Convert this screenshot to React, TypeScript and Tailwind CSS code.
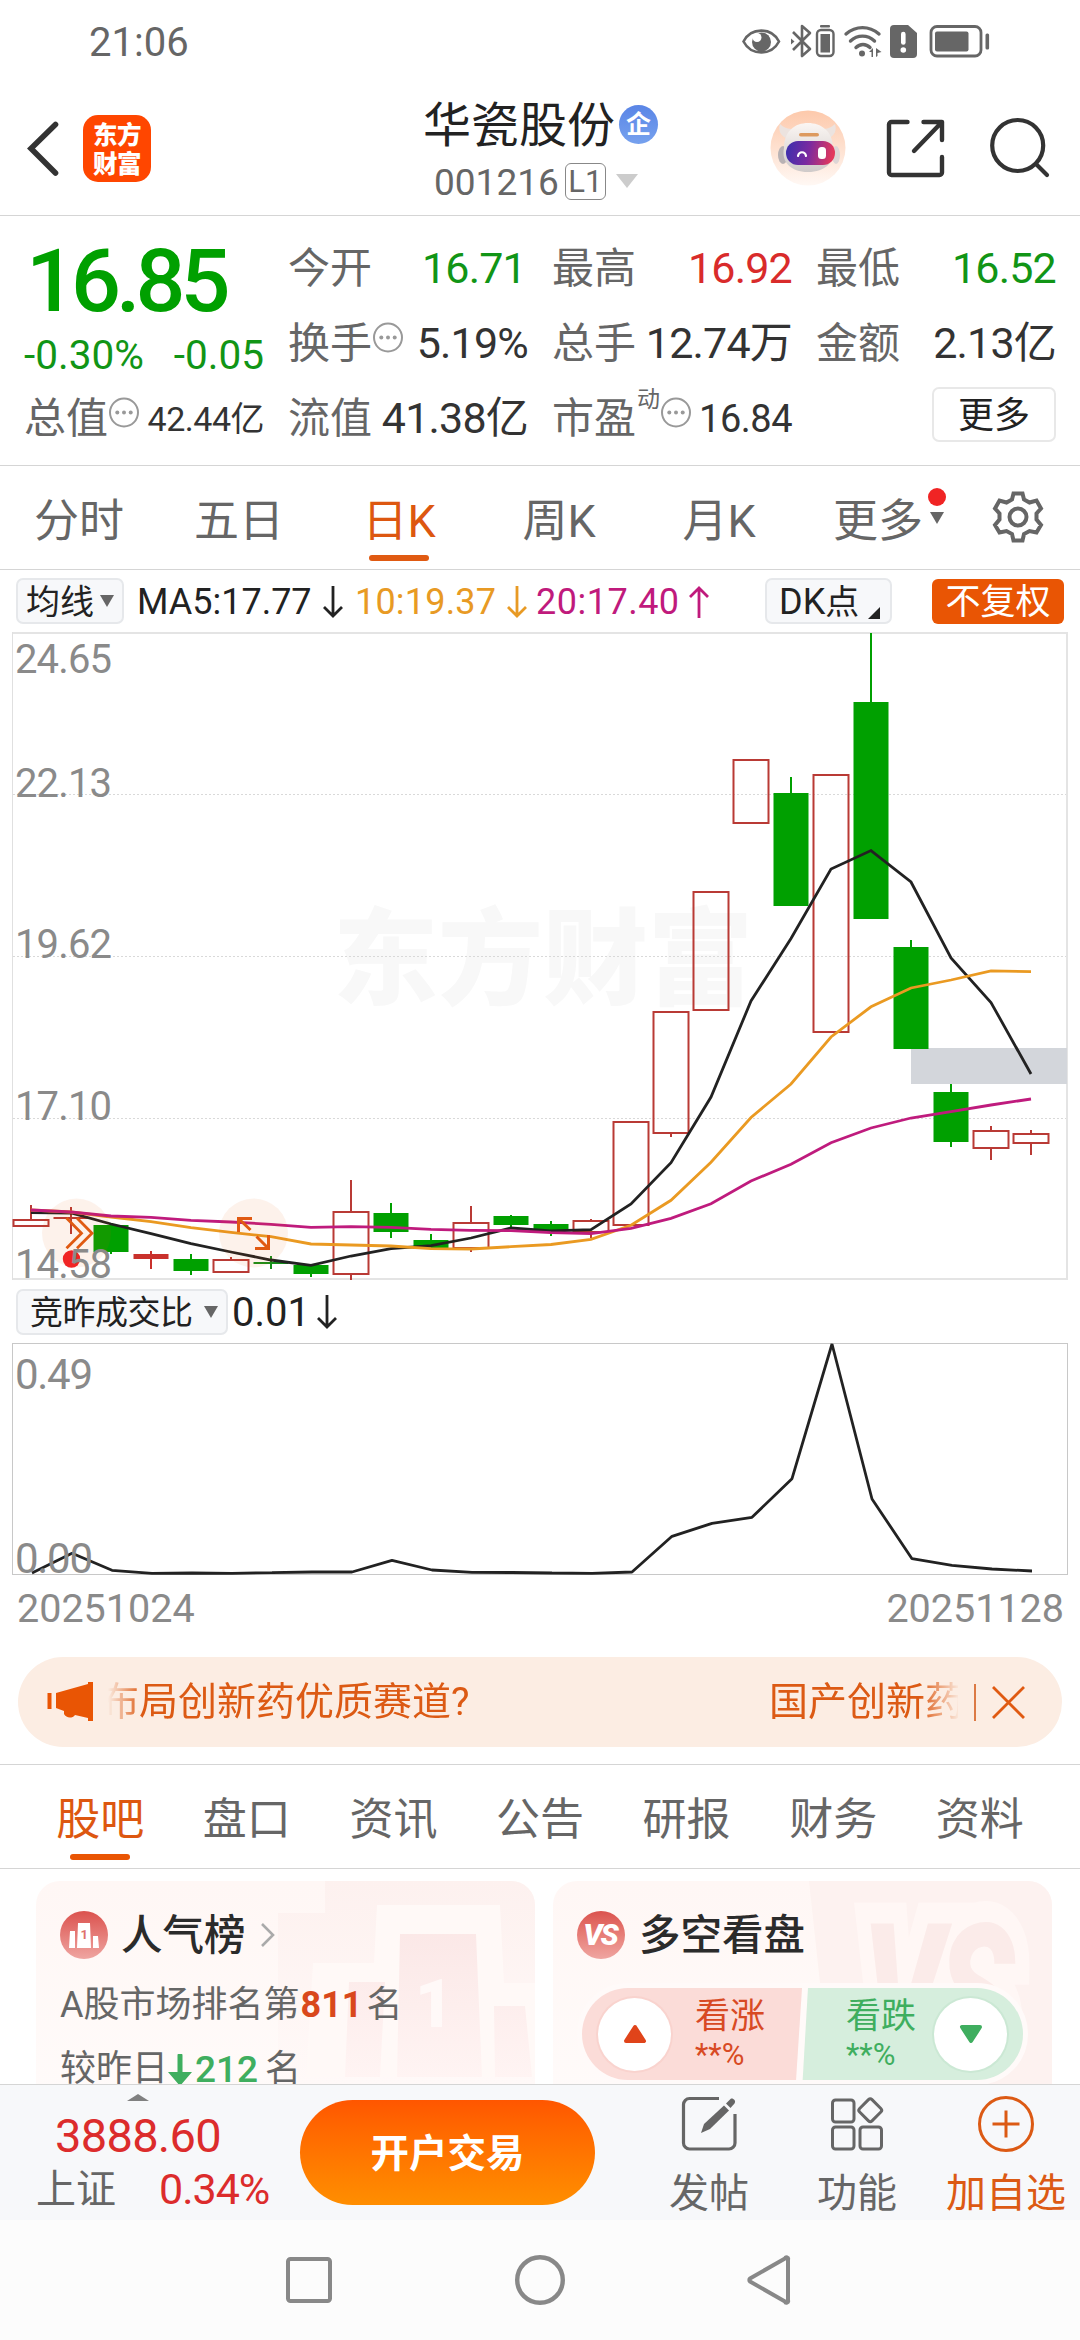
import type { ReactNode } from 'react';

const CJK = "'Noto Sans CJK SC', sans-serif";

const RED = '#b93a35';
const GREEN = '#00a000';

// First candle centre and the distance between two trading days.
const X0 = 31;
const STEP = 40;
const dayX = (i: number) => X0 + STEP * i;

type Candle = {
  kind: 'up' | 'down' | 'flat';
  top: number;
  bottom: number;
  high?: number;
  low?: number;
  color?: string;
};

const CANDLES: Candle[] = [
  { kind: 'up', top: 1219, bottom: 1227, high: 1205 },
  { kind: 'flat', top: 1217, bottom: 1219, high: 1207, low: 1234, color: RED },
  { kind: 'down', top: 1225, bottom: 1252, low: 1254 },
  { kind: 'flat', top: 1254, bottom: 1259, high: 1251, low: 1269, color: '#c9312c' },
  { kind: 'down', top: 1259, bottom: 1271, high: 1254, low: 1275 },
  { kind: 'up', top: 1259, bottom: 1273, high: 1257 },
  { kind: 'flat', top: 1262, bottom: 1264, high: 1256, low: 1269, color: '#15901a' },
  { kind: 'down', top: 1265, bottom: 1274, low: 1277 },
  { kind: 'up', top: 1211, bottom: 1275, high: 1180, low: 1280 },
  { kind: 'down', top: 1213, bottom: 1232, high: 1203, low: 1238 },
  { kind: 'down', top: 1240, bottom: 1249, high: 1234 },
  { kind: 'up', top: 1222, bottom: 1249, high: 1206, low: 1252 },
  { kind: 'down', top: 1216, bottom: 1225, high: 1215, low: 1228 },
  { kind: 'down', top: 1224, bottom: 1231, high: 1221, low: 1236 },
  { kind: 'up', top: 1220, bottom: 1233, high: 1219, low: 1238 },
  { kind: 'up', top: 1121, bottom: 1226 },
  { kind: 'up', top: 1011, bottom: 1134, low: 1137 },
  { kind: 'up', top: 891, bottom: 1011 },
  { kind: 'up', top: 759, bottom: 824 },
  { kind: 'down', top: 793, bottom: 906, high: 777 },
  { kind: 'up', top: 774, bottom: 1033 },
  { kind: 'down', top: 702, bottom: 919, high: 633 },
  { kind: 'down', top: 947, bottom: 1049, high: 940 },
  { kind: 'down', top: 1092, bottom: 1142, high: 1084, low: 1147 },
  { kind: 'up', top: 1130, bottom: 1149, high: 1126, low: 1160 },
  { kind: 'up', top: 1133, bottom: 1144, high: 1130, low: 1155 },
];

const MA5 = [
  1212.7, 1213, 1224, 1233.7, 1243.7, 1252, 1260, 1265.3, 1256, 1248.7, 1245.7, 1238, 1228, 1231,
  1229.7, 1204, 1162.7, 1097, 1001, 938.4, 869, 850.6, 882, 958, 1002.5, 1074,
];
const MA10 = [
  1210, 1212, 1217, 1221.7, 1227.7, 1232.3, 1236.7, 1244, 1245, 1246, 1248.7, 1249, 1246.7, 1244.5,
  1239.3, 1225.3, 1200.3, 1162.3, 1117.5, 1084, 1037, 1006.8, 988, 980, 970.8, 971.6,
];
const MA20 = [
  1210, 1212, 1216, 1217.3, 1220.3, 1222, 1224.3, 1227.3, 1226.7, 1227.3, 1229.3, 1230.3, 1230.7,
  1232.7, 1233.7, 1228.3, 1218.3, 1203.7, 1181, 1164.3, 1142.7, 1128, 1118, 1111.6, 1105, 1099,
];
const RATIO = [
  1573, 1553.3, 1570.3, 1573.3, 1573, 1573.3, 1572.7, 1572, 1572, 1560.3, 1570, 1572.3, 1572.5,
  1573, 1573.3, 1572, 1536.3, 1523.3, 1517.3, 1478.7, 1344, 1499, 1558.7, 1565.3, 1569, 1571,
];

const AXIS = [
  { label: '24.65', y: 672.5 },
  { label: '22.13', y: 796.5 },
  { label: '19.62', y: 958 },
  { label: '17.10', y: 1119.5 },
  { label: '14.58', y: 1277.5 },
];

const points = (ys: number[], dx = 0) => ys.map((y, i) => `${dayX(i) + dx},${y}`).join(' ');

function StatusBar() {
  return (
    <div className="flex h-[82px] items-center justify-between pl-[89px] pr-[90px] text-[#666]">
      <span className="pt-[4px] text-[40px] leading-none">21:06</span>
      <svg className="mt-[-1px]" width="250" height="36" viewBox="740 22 250 36" fill="none">
        {/* eye */}
        <path d="M743.5 40.5C751 26 771.500 26 779 40.500C771.500 55 751 55 743.500 40.500Z" stroke="#666" strokeWidth="2.600" />
        <circle cx="761.500" cy="41" r="9.500" fill="#666" />
        <circle cx="757" cy="36.500" r="4.500" fill="#fff" />
        {/* bluetooth */}
        <path d="M793 31l17 17-8 7V25l8 7-17 17" stroke="#666" strokeWidth="2.600" strokeLinejoin="round" />
        <path d="M791 37.500l3.500 3-3.500 3z" fill="#666" />
        <rect x="820" y="24" width="10" height="2.600" rx="1" fill="#666" />
        <rect x="817" y="29" width="16.500" height="26" rx="4" stroke="#666" strokeWidth="2.400" />
        <rect x="820.500" y="33" width="9.500" height="18.500" fill="#666" />
        {/* wifi */}
        <path d="M846 33c10-8.500 23-8.500 33 0M850.500 40c7-6.500 17-6.500 24 0M856 46.500c4-4 10-4 14 0" stroke="#666" strokeWidth="3.400" strokeLinecap="round" />
        <circle cx="862" cy="52.500" r="3" fill="#666" />
        <path d="M869 51l4-4v9h-1.500v-5zM876 47v9l1.500-1v-3l4-1z" fill="#666" />
        {/* sim */}
        <path d="M894 24h14l9 8v21a4 4 0 0 1-4 4h-19a4 4 0 0 1-4-4V28a4 4 0 0 1 4-4z" fill="#666" />
        <path d="M903.300 33v8.500" stroke="#fff" strokeWidth="4.600" strokeLinecap="round" />
        <circle cx="903.300" cy="49" r="2.800" fill="#fff" />
        {/* battery */}
        <rect x="931" y="25.500" width="50" height="29.500" rx="6" stroke="#666" strokeWidth="2.800" />
        <rect x="935" y="30.500" width="33.500" height="20" rx="2" fill="#666" />
        <rect x="985.500" y="32.500" width="3.600" height="16" rx="1.500" fill="#666" />
      </svg>
    </div>
  );
}

function Robot() {
  return (
    <svg width="76" height="76" viewBox="0 0 76 76">
      <defs>
        <linearGradient id="halo" x1="0" y1="0" x2="0" y2="1">
          <stop offset="0" stopColor="#fdc9ab" />
          <stop offset="1" stopColor="#fff8f4" />
        </linearGradient>
        <linearGradient id="visor" x1="0" y1="0" x2="1" y2="0.1">
          <stop offset="0" stopColor="#3a2fae" />
          <stop offset="0.5" stopColor="#7a2aa0" />
          <stop offset="1" stopColor="#e3385c" />
        </linearGradient>
        <linearGradient id="shell" x1="0" y1="0" x2="0" y2="1">
          <stop offset="0" stopColor="#fbf6f3" />
          <stop offset="1" stopColor="#cfcac9" />
        </linearGradient>
      </defs>
      <circle cx="38" cy="38" r="37.500" fill="url(#halo)" />
      <path d="M18 29C10 26 8 20 10 14c4 4 8 5 13 5zM57 29c8-3 10-9 8-15-4 4-8 5-13 5z" fill="#ece3df" />
      <ellipse cx="13" cy="45" rx="5" ry="9" fill="#b9b2b4" />
      <ellipse cx="66" cy="45" rx="4" ry="9" fill="#ddd6d6" />
      <path d="M14 38c0-17 11-25 24-25s25 8 25 25c3 14-8 24-25 24S11 52 14 38z" fill="url(#shell)" />
      <rect x="29" y="23" width="20" height="3.600" rx="1.800" fill="#dd9a5f" />
      <rect x="16" y="31" width="49" height="24" rx="12" fill="url(#visor)" />
      <path d="M28 46c1-5 7-5 8 0" stroke="#fff" strokeWidth="2.200" fill="none" strokeLinecap="round" />
      <rect x="48" y="37" width="8" height="12" rx="3.500" fill="#fff" />
    </svg>
  );
}

function Header() {
  return (
    <header className="flex h-[134px] items-start border-b border-[#d5d5d5]">
      <svg className="ml-[26px] mt-[38px] shrink-0" width="36" height="56" viewBox="26 120 36 56" fill="none">
        <path d="M55.500 124.500L31 148.500l24.500 24.500" stroke="#333" strokeWidth="5.600" strokeLinecap="round" strokeLinejoin="miter" />
      </svg>
      <div className="ml-[21px] mt-[33px] flex h-[67px] w-[68px] flex-col items-center justify-center rounded-[15px] bg-[#ff4600] pt-[2px] text-[24.500px] font-black leading-[29px] tracking-[-0.5px] text-white">
        <span>东方</span>
        <span>财富</span>
      </div>
      <div className="ml-[272px] mt-[17px] flex w-[240px] flex-col">
        <div className="flex h-[54px] items-center">
          <span className="text-[48px] leading-none text-[#222]">华瓷股份</span>
          <span className="ml-[4px] mt-[-3px] flex size-[39px] items-center justify-center rounded-full bg-linear-to-b from-[#5a85e6] to-[#76a1ee] text-[25px] font-bold leading-none text-white">
            企
          </span>
        </div>
        <div className="mt-[8px] flex h-[40px] items-center pl-[11px] text-[#666]">
          <span className="pt-[3px] text-[37px] leading-none">001216</span>
          <span className="ml-[6px] flex h-[37px] w-[41px] items-center justify-center rounded-[6px] border border-[#888] text-[31px] leading-none">L1</span>
          <svg className="ml-[10px]" width="22" height="14" viewBox="0 0 22 14">
            <path d="M0 0h22L11 14z" fill="#ccc" />
          </svg>
        </div>
      </div>
      <div className="ml-[107px] mt-[28px]">
        <Robot />
      </div>
      <svg className="ml-[39px] mt-[35px]" width="62" height="62" viewBox="886 117 62 62" fill="none" stroke="#333" strokeWidth="4.400" strokeLinecap="round" strokeLinejoin="round">
        <path d="M908.500 122H892.500a2.500 2.500 0 0 0-2.500 2.500v48a2.500 2.500 0 0 0 2.500 2.500h48a2.500 2.500 0 0 0 2.500-2.500V157" />
        <path d="M924.500 122H943v18M943 122l-28 29" />
      </svg>
      <svg className="ml-[40px] mt-[33px]" width="66" height="66" viewBox="988 115 66 66" fill="none" stroke="#333" strokeWidth="4.200" strokeLinecap="round">
        <circle cx="1018.700" cy="145.500" r="25.500" />
        <path d="M1037 164l11 11" />
      </svg>
    </header>
  );
}

function Dots() {
  return (
    <svg className="mt-[-12px] shrink-0" width="31" height="31" viewBox="0 0 31 31">
      <circle cx="16" cy="15.500" r="14" fill="none" stroke="#999" strokeWidth="2" />
      <circle cx="9.300" cy="15.500" r="2" fill="#999" />
      <circle cx="16" cy="15.500" r="2" fill="#999" />
      <circle cx="22.700" cy="15.500" r="2" fill="#999" />
    </svg>
  );
}

function Stat({ label, value, hint, tone = 'text-[#333]' }: { label: string; value: string; hint?: ReactNode; tone?: string }) {
  return (
    <div className="flex h-[75px] items-center whitespace-nowrap pt-[2px] leading-none">
      <span className="text-[42px] text-[#666]">{label}</span>
      {hint}
      <span className={`ml-auto text-[43px] tracking-[-0.8px] ${tone}`}>{value}</span>
    </div>
  );
}

function Quote() {
  return (
    <section className="flex h-[250px] gap-6 border-b border-[#d5d5d5] px-6 pt-[14px]">
      <div className="flex w-[240px] flex-col whitespace-nowrap leading-none">
        <div className="flex h-[101px] items-center pl-[2px] text-[88px] font-medium tracking-[-5px] text-[#00a000]">
          16.85
        </div>
        <div className="flex h-[49px] items-center justify-between text-[40.500px] text-[#119516]">
          <span>-0.30%</span>
          <span>-0.05</span>
        </div>
        <div className="flex h-[75px] items-center pt-[2px]">
          <span className="text-[42px] text-[#666]">总值</span>
          <Dots />
          <span className="ml-auto text-[34px] tracking-[-0.5px] text-[#333]">42.44亿</span>
        </div>
      </div>
      <div className="w-[240px]">
        <Stat label="今开" value="16.71" tone="pr-[2px] text-[#119516]" />
        <Stat label="换手" value="5.19%" hint={<Dots />} />
        <Stat label="流值" value="41.38亿" />
      </div>
      <div className="w-[240px]">
        <Stat label="最高" value="16.92" tone="text-[#d92b2b]" />
        <Stat label="总手" value="12.74万" />
        <div className="flex h-[75px] items-center whitespace-nowrap pt-[2px] leading-none">
          <span className="text-[42px] text-[#666]">市盈</span>
          <span className="mt-[-38px] pl-[1px] text-[23px] text-[#666]">动</span>
          <Dots />
          <span className="ml-auto text-[38px] tracking-[-0.5px] text-[#333]">16.84</span>
        </div>
      </div>
      <div className="w-[240px]">
        <Stat label="最低" value="16.52" tone="text-[#119516]" />
        <Stat label="金额" value="2.13亿" />
        <div className="flex h-[75px] items-center justify-end">
          <button className="mt-[-6px] h-[55px] w-[124px] rounded-[7px] border-2 border-[#e8e8e8] pt-[2px] text-[36px] leading-none text-[#222]">更多</button>
        </div>
      </div>
    </section>
  );
}

function Caret({ className = '' }: { className?: string }) {
  return (
    <svg className={className} width="14" height="12" viewBox="0 0 14 12">
      <path d="M0 0h14L7 12z" fill="#666" />
    </svg>
  );
}

function PeriodTabs() {
  return (
    <nav className="flex h-[104px] border-b border-[#d5d5d5] text-[45px] leading-none text-[#666]">
      {['分时', '五日', '日K', '周K', '月K'].map((t) => (
        <div key={t} className={`flex w-[160px] flex-col items-center pr-[2px] pt-[33px] ${t === '日K' ? 'text-[#dd5710]' : ''}`}>
          <span>{t}</span>
          {t === '日K' && <span className="mt-[11px] h-[6px] w-[60px] rounded-full bg-[#e05a12]" />}
        </div>
      ))}
      <div className="flex w-[160px] pl-[33px] pt-[33px]">
        <span>更多</span>
        <div className="ml-[5px] mt-[-11px] flex flex-col items-center">
          <span className="size-[18px] rounded-full bg-[#f02424]" />
          <Caret className="mt-[6px]" />
        </div>
      </div>
      <svg className="ml-[31px] mt-[24px]" width="54" height="54" viewBox="-27 -27 54 54" fill="none" stroke="#666" strokeWidth="4" strokeLinejoin="miter">
        <path d="M-4.500-23.500h9l1.500 6 5.500 3 7-2 4.500 8-4.500 5v6l4.500 5.500-4.500 7.500-7-1.500-5.500 3-1.500 6.500h-9l-1.500-6.500-5.500-3-7 1.500-4.500-7.500 4.500-5.500v-6l-4.500-5 4.500-8 7 2 5.500-3z" />
        <circle r="8.500" />
      </svg>
    </nav>
  );
}

function Arrow({ color, up = false, h = 32 }: { color: string; up?: boolean; h?: number }) {
  return (
    <svg className={up ? 'rotate-180' : ''} width="20" height={h} viewBox={`0 0 20 ${h}`} fill="none" stroke={color} strokeWidth="2.800">
      <path d={`M10 0v${h - 2}M1 ${h - 11}l9 9 9-9`} />
    </svg>
  );
}

function MaRow() {
  return (
    <div className="flex h-[62px] items-center whitespace-nowrap pl-4 pr-4 text-[36px] leading-none">
      <div className="flex h-[46px] w-[108px] shrink-0 items-center rounded-[7px] border-2 border-[#e6e8eb] bg-[#f7f8fa] pl-[8px] text-[34px] text-[#222]">
        <span className="pt-[2px]">均线</span>
        <Caret className="ml-[6px]" />
      </div>
      <div className="flex w-[219px] items-center justify-between pl-[13px] pt-[2px] text-[#222]">
        MA5:17.77
        <Arrow color="#222" />
      </div>
      <div className="flex w-[184px] items-center justify-between pl-[12px] pt-[2px] text-[#e89a24]">
        <span className="tracking-[0.2px]">10:19.37</span>
        <Arrow color="#e89a24" />
      </div>
      <div className="flex w-[182px] items-center justify-between pl-[9px] pt-[2px] text-[#c01a7c]">
        <span className="tracking-[0.5px]">20:17.40</span>
        <Arrow color="#c01a7c" up />
      </div>
      <div className="ml-auto flex h-[46px] w-[127px] items-center rounded-[7px] border-2 border-[#e6e8eb] bg-[#f7f8fa] pl-[12px] text-[#222]">
        <span className="pt-[2px]">
          DK<span className="text-[34px]">点</span>
        </span>
        <svg className="ml-[9px] mt-[23px]" width="12" height="12" viewBox="0 0 12 12">
          <path d="M12 0v12H0z" fill="#222" />
        </svg>
      </div>
      <div className="ml-[40px] flex h-[45px] w-[132px] items-center justify-center rounded-[6px] bg-[#e95504] pt-[2px] text-[35px] text-white">
        不复权
      </div>
    </div>
  );
}

function CandleShape({ c, x }: { c: Candle; x: number }) {
  const color = c.color ?? (c.kind === 'up' ? RED : GREEN);
  const h = c.bottom - c.top;
  return (
    <g>
      {c.high !== undefined && <line x1={x} x2={x} y1={c.high} y2={c.top} stroke={color} strokeWidth="2" />}
      {c.low !== undefined && <line x1={x} x2={x} y1={c.bottom} y2={c.low} stroke={color} strokeWidth="2" />}
      {c.kind === 'up' ? (
        <rect x={x - 17.5} y={c.top + 1} width="35" height={h - 2} fill="none" stroke={color} strokeWidth="2" />
      ) : (
        <rect x={x - 17.5} y={c.top} width="35" height={h} fill={color} />
      )}
    </g>
  );
}

function KChart() {
  return (
    <svg className="ml-[12px] block" width="1056" height="648" viewBox="12 632 1056 648" fill="none">
      <text x="333" y="996" fontSize="105" fontWeight="900" fontFamily={CJK} fill="#f8f8f8">
        东方财富
      </text>
      {[794.5, 956.5, 1118.5].map((y) => (
        <line key={y} x1="13" x2="1067" y1={y} y2={y} stroke="#d9d9d9" strokeDasharray="2 2" />
      ))}
      <path d="M12 633H1068M12 1279H1068" stroke="#e4e4e4" strokeWidth="2" />
      <path d="M12.500 632V1280" stroke="#e0e0e0" />
      <path d="M1067 632V1280" stroke="#e4e4e4" strokeWidth="2" />
      <rect x="911" y="1048" width="156" height="36" fill="#d3d6db" />
      {CANDLES.map((c, i) => (
        <CandleShape key={i} c={c} x={dayX(i)} />
      ))}
      <polyline points={points(MA5)} stroke="#222" strokeWidth="2.800" />
      <polyline points={points(MA10)} stroke="#ea9a22" strokeWidth="2.800" />
      <polyline points={points(MA20)} stroke="#bf1b7d" strokeWidth="2.800" />

      {/* floating chart shortcuts */}
      <circle cx="76.500" cy="1233" r="34.500" fill="#e95504" fillOpacity="0.080" />
      <path d="M66.500 1218l15 15.300-15 15M77 1218l15 15.300-15 15" stroke="#e05a12" strokeWidth="2.800" />
      <circle cx="253.500" cy="1233" r="34.500" fill="#e95504" fillOpacity="0.080" />
      <path d="M252 1218.500h-13.500V1232M238.500 1218.500l12 11.500M255 1248.500h13.500V1235M268.500 1248.500l-12-12" stroke="#e05a12" strokeWidth="3" />
      <circle cx="71.500" cy="1259" r="8.700" fill="#f02424" />

      {AXIS.map((a) => (
        <text key={a.label} x="15" y={a.y} fontSize="40" textLength="97" fill="#8a8a8a">
          {a.label}
        </text>
      ))}
    </svg>
  );
}

function RatioRow() {
  return (
    <div className="flex h-[63px] items-center whitespace-nowrap pl-4 leading-none text-[#222]">
      <div className="flex h-[46px] w-[212px] items-center rounded-[7px] border-2 border-[#e6e8eb] bg-[#f7f8fa] pl-[12px] text-[33px] tracking-[-0.5px]">
        <span className="pt-[2px]">竞昨成交比</span>
        <Caret className="ml-[11px]" />
      </div>
      <span className="ml-[4px] mr-[7px] pt-[2px] text-[40px]">0.01</span>
      <Arrow color="#222" h={34} />
    </div>
  );
}

function RatioChart() {
  return (
    <>
      <svg className="ml-[12px] block" width="1056" height="232" viewBox="12 1343 1056 232" fill="none">
        <rect x="12.500" y="1343.500" width="1055" height="231" stroke="#c8c8c8" />
        <polyline points={points(RATIO, 1)} stroke="#222" strokeWidth="2.800" strokeLinejoin="bevel" />
        <text x="15" y="1389" fontSize="42" textLength="78" fill="#8a8a8a">0.49</text>
        <text x="15" y="1573" fontSize="42" textLength="78" fill="#8a8a8a">0.00</text>
      </svg>
      <div className="flex h-[82px] justify-between pl-[17px] pr-[16px] pt-[14px] text-[39.500px] leading-none text-[#8a8a8a]">
        <span>20251024</span>
        <span>20251128</span>
      </div>
    </>
  );
}

function Banner() {
  return (
    <div className="mx-[18px] flex h-[90px] items-center rounded-full bg-[#fcede3] pl-[29px] text-[39px] leading-none text-[#dc5a14]">
      <svg className="shrink-0" width="46" height="40" viewBox="47 1682 46 40" fill="#e95504">
        <rect x="47.500" y="1693" width="4" height="16" />
        <path d="M56 1693l32-9v-2h5v39h-5v-3l-13-3c-3 4-9 3-11-1v-3l-8-3z" />
      </svg>
      <div className="ml-[15px] flex w-[850px] overflow-hidden whitespace-nowrap pb-[2px] pt-[3px] [mask-image:linear-gradient(to_right,transparent_0,black_34px,black_812px,transparent_852px)]">
        <span className="ml-[-8px] w-[669px] shrink-0">布局创新药优质赛道?</span>
        <span className="shrink-0">国产创新药</span>
      </div>
      <span className="ml-[16px] h-[37px] w-[2px] bg-[#dc7a45]" />
      <svg className="ml-[16px]" width="33" height="33" viewBox="0 0 33 33" fill="none" stroke="#e05a12" strokeWidth="2.800">
        <path d="M1 1l31 31M32 1L1 32" />
      </svg>
    </div>
  );
}

function InfoTabs() {
  return (
    <nav className="mt-[17px] flex h-[105px] border-b border-t border-[#d5d5d5] pl-[27px] pr-[27px] text-[44px] leading-none text-[#666]">
      {['股吧', '盘口', '资讯', '公告', '研报', '财务', '资料'].map((t, i) => (
        <div key={t} className={`flex flex-1 flex-col items-center pt-[33px] ${i === 0 ? 'text-[#dd5710]' : ''}`}>
          <span>{t}</span>
          {i === 0 && <span className="mt-[12px] h-[6px] w-[60px] rounded-full bg-[#e95504]" />}
        </div>
      ))}
    </nav>
  );
}

function RankCard() {
  return (
    <div className="relative h-[240px] w-[499px] overflow-hidden rounded-[24px] bg-linear-to-b from-[#fff7f5] to-[#fffbfa]">
      <svg className="absolute inset-0" width="499" height="204" viewBox="0 0 499 204">
        <defs>
          <linearGradient id="fade" x1="0" y1="0" x2="0" y2="1">
            <stop offset="0" stopColor="#fdf1ef" />
            <stop offset="1" stopColor="#fff9f8" />
          </linearGradient>
          <linearGradient id="fade2" x1="0" y1="0" x2="0" y2="1">
            <stop offset="0" stopColor="#fbe8e7" />
            <stop offset="1" stopColor="#fff4f3" />
          </linearGradient>
        </defs>
        <path d="M242 32h47V0h210v204H242z" fill="url(#fade)" />
        <path d="M277 82h61l3-58h123l4 78h31v94H270z" fill="#fff9f7" />
        <path d="M313 101h36l-5 95h-35zM364 53h76l6 143h-85zM458 125h31l7 71h-37z" fill="url(#fade2)" />
        <text x="379" y="146" fontSize="66" fontWeight="900" fill="#fff9f8">1</text>
      </svg>
      <div className="relative pl-[24px] leading-none">
        <div className="flex h-[54px] items-center pt-[54px]">
          <svg width="48" height="48" viewBox="0 0 48 48">
            <defs>
              <linearGradient id="badge" x1="0" y1="0" x2="0" y2="1">
                <stop offset="0" stopColor="#db524e" />
                <stop offset="1" stopColor="#efa5a1" />
              </linearGradient>
            </defs>
            <circle cx="24" cy="24" r="24" fill="url(#badge)" />
            <path d="M10 20h5v17H9zM18 12h12l1 25H17zM33 25h5l1 12h-6z" fill="#fff" />
            <text x="20.500" y="28" fontSize="13" fontWeight="700" fill="#e0716d">1</text>
          </svg>
          <span className="ml-[13px] pt-[2px] text-[41.500px] font-medium text-[#2b2b2b]">人气榜</span>
          <svg className="ml-[15px]" width="14" height="26" viewBox="0 0 14 26" fill="none" stroke="#aaa" strokeWidth="2.600">
            <path d="M1 2l11 11L1 24" />
          </svg>
        </div>
        <div className="mt-[50px] flex h-[40px] items-center whitespace-nowrap text-[36px] text-[#666]">
          A股市场排名第<b className="ml-px text-[36px] text-[#d9481c]">811</b>
          <span className="ml-[4px]">名</span>
        </div>
        <div className="mt-[24px] flex h-[40px] items-center whitespace-nowrap text-[36px] text-[#666]">
          较昨日
          <svg className="mt-[4px]" width="24" height="34" viewBox="0 0 24 34" fill="#3fae5f">
            <path d="M9.500 1.500a2.500 2.500 0 0 1 5 0V18H24L12 32 0 18h9.500z" />
          </svg>
          <span className="ml-[3px] text-[37px] font-medium text-[#3fae5f]">212</span>
          <span className="ml-[7px]">名</span>
        </div>
      </div>
    </div>
  );
}

function VoteCard() {
  return (
    <div className="relative h-[240px] w-[499px] overflow-hidden rounded-[24px] bg-linear-to-b from-[#fff7f5] to-[#fffbfa]">
      <svg className="absolute inset-0" width="499" height="204" viewBox="0 0 499 204">
        <path d="M256 0h243v204H278z" fill="#fdf2f0" />
        <g transform="scale(0.670 1)">
          <text x="462" y="177" fontSize="188" fontWeight="900" fontStyle="italic" fill="#fbebe9" stroke="#fff7f5" strokeWidth="42" paintOrder="stroke" letterSpacing="-8">
            VS
          </text>
        </g>
      </svg>
      <div className="relative pl-[24px] leading-none">
        <div className="flex h-[54px] items-center pt-[54px]">
          <span className="flex size-[48px] items-center justify-center rounded-full bg-linear-to-b from-[#db524e] to-[#efa5a1] pr-[2px] text-[30px] font-black italic tracking-[-2px] text-white">
            VS
          </span>
          <span className="ml-[14px] pt-[2px] text-[41.500px] font-medium text-[#2b2b2b]">多空看盘</span>
        </div>
        <div className="mt-[48px] flex h-[102px] w-[451px] items-center rounded-full border-[5px] border-[#fffaf9] bg-[#fffaf9]">
          <div className="flex h-[92px] w-[220px] items-center rounded-l-full bg-[#fbdcd8] pl-[16px] text-[#d84a24] [clip-path:polygon(0_0,100%_0,97.300%_100%,0_100%)]">
            <span className="flex size-[73px] items-center justify-center rounded-full bg-white ring-2 ring-[#f9d3ce]">
              <svg width="24" height="20" viewBox="0 0 24 20" fill="#e0441a" stroke="#e0441a" strokeWidth="4" strokeLinejoin="round">
                <path d="M12 3l9 14H3z" />
              </svg>
            </span>
            <div className="ml-[24px] flex flex-col gap-[3px] pt-[3px] text-[35px]">
              <span className="leading-[36px]">看涨</span>
              <span className="text-[31px] leading-[34px]">**%</span>
            </div>
          </div>
          <div className="flex h-[92px] w-[221px] items-center rounded-r-full bg-[#d6eedd] pl-[44px] text-[#3fae5f] [clip-path:polygon(2.700%_0,100%_0,100%_100%,0.300%_100%)]">
            <div className="flex flex-col gap-[3px] pt-[3px] text-[35px]">
              <span className="leading-[36px]">看跌</span>
              <span className="text-[31px] leading-[34px]">**%</span>
            </div>
            <span className="ml-[18px] flex size-[73px] items-center justify-center rounded-full bg-white ring-2 ring-[#cbe8d4]">
              <svg width="24" height="20" viewBox="0 0 24 20" fill="#3fae5f" stroke="#3fae5f" strokeWidth="4" strokeLinejoin="round">
                <path d="M12 17L3 3h18z" />
              </svg>
            </span>
          </div>
        </div>
      </div>
    </div>
  );
}

function BottomItem({ label, icon, className }: { label: string; icon: ReactNode; className: string }) {
  return (
    <div className={`flex flex-col items-center pt-[10px] text-[40px] leading-none ${className}`}>
      {icon}
      <span className="mt-[21px]">{label}</span>
    </div>
  );
}

function BottomBar() {
  return (
    <div className="flex h-[136px] shrink-0 border-t border-[#d5d5d5] bg-[#f7f8fa]">
      <div className="w-[300px] whitespace-nowrap pt-[9px] leading-none text-[#dc2c2c]">
        <svg className="ml-[127px] block" width="22" height="7" viewBox="0 0 22 7">
          <path d="M11 0l11 7H0z" fill="#808080" />
        </svg>
        <div className="ml-[55px] mt-[11px] text-[47px] tracking-[-0.7px]">3888.60</div>
        <div className="ml-[36px] mt-[9px] flex items-center">
          <span className="text-[40px] text-[#666]">上证</span>
          <span className="ml-[43px] text-[43px] tracking-[-1px]">0.34%</span>
        </div>
      </div>
      <button className="mt-[15px] h-[105px] w-[295px] rounded-full bg-linear-to-b from-[#ff5600] to-[#ff8e00] pt-[4px] text-[38.500px] font-bold leading-none text-white">
        开户交易
      </button>
      <BottomItem
        label="发帖"
        className="ml-[74px] w-[80px] text-[#666]"
        icon={
          <svg width="58" height="58" viewBox="0 0 58 58" fill="none">
            <path d="M39 3.500H9.500a6 6 0 0 0-6 6V48a6 6 0 0 0 6 6H49a6 6 0 0 0 6-6V19" stroke="#666" strokeWidth="3.200" />
            <path d="M21 38l3-9 20-18.500 5 5L30 34z" fill="#666" />
            <path d="M46 8.500l4.500-4.500c2-1.500 6 1.500 4 4.500L50.500 13z" fill="#666" />
          </svg>
        }
      />
      <BottomItem
        label="功能"
        className="ml-[68px] w-[80px] text-[#666]"
        icon={
          <svg width="58" height="58" viewBox="0 0 58 58" fill="none" stroke="#666" strokeWidth="3">
            <rect x="4.500" y="5" width="21.500" height="22" rx="3" />
            <rect x="4.500" y="32" width="21.500" height="22" rx="3" />
            <rect x="32" y="32" width="21.500" height="22" rx="3" />
            <rect x="33.500" y="6.500" width="17.500" height="17.500" rx="2.500" transform="rotate(45 42.250 15.250)" />
          </svg>
        }
      />
      <BottomItem
        label="加自选"
        className="ml-[48px] w-[122px] text-[#dc5a14]"
        icon={
          <svg width="58" height="58" viewBox="0 0 58 58" fill="none" stroke="#dc5a14" strokeWidth="3">
            <circle cx="29" cy="29" r="26.500" />
            <path d="M29 15.500v27M15.500 29h27" />
          </svg>
        }
      />
    </div>
  );
}

function SystemNav() {
  return (
    <div className="flex h-[120px] shrink-0 items-center bg-[#fcfcfc]">
      <svg className="ml-[285px]" width="48" height="48" viewBox="0 0 48 48" fill="none" stroke="#888" strokeWidth="4">
        <rect x="3" y="3" width="42" height="42" rx="2.500" />
      </svg>
      <svg className="ml-[181px]" width="52" height="52" viewBox="0 0 52 52" fill="none" stroke="#888" strokeWidth="4.400">
        <circle cx="26" cy="26" r="22.800" />
      </svg>
      <svg className="ml-[179px]" width="48" height="52" viewBox="0 0 48 52" fill="none" stroke="#888" strokeWidth="4" strokeLinejoin="round">
        <path d="M5 24.500L40 4.500a1.500 1.500 0 0 1 3 1v41a1.500 1.500 0 0 1-3 1L5 27.500a2 2 0 0 1 0-3z" />
      </svg>
    </div>
  );
}

export default function App() {
  return (
    <div className="flex h-[2340px] w-[1080px] flex-col overflow-hidden bg-white font-[Roboto,'Noto_Sans_CJK_SC',sans-serif]">
      <div className="h-[2084px] shrink-0 overflow-hidden">
        <StatusBar />
        <Header />
        <Quote />
        <PeriodTabs />
        <MaRow />
        <KChart />
        <RatioRow />
        <RatioChart />
        <Banner />
        <InfoTabs />
        <div className="mt-[12px] flex gap-[18px] pl-[36px]">
          <RankCard />
          <VoteCard />
        </div>
      </div>
      <BottomBar />
      <SystemNav />
    </div>
  );
}
